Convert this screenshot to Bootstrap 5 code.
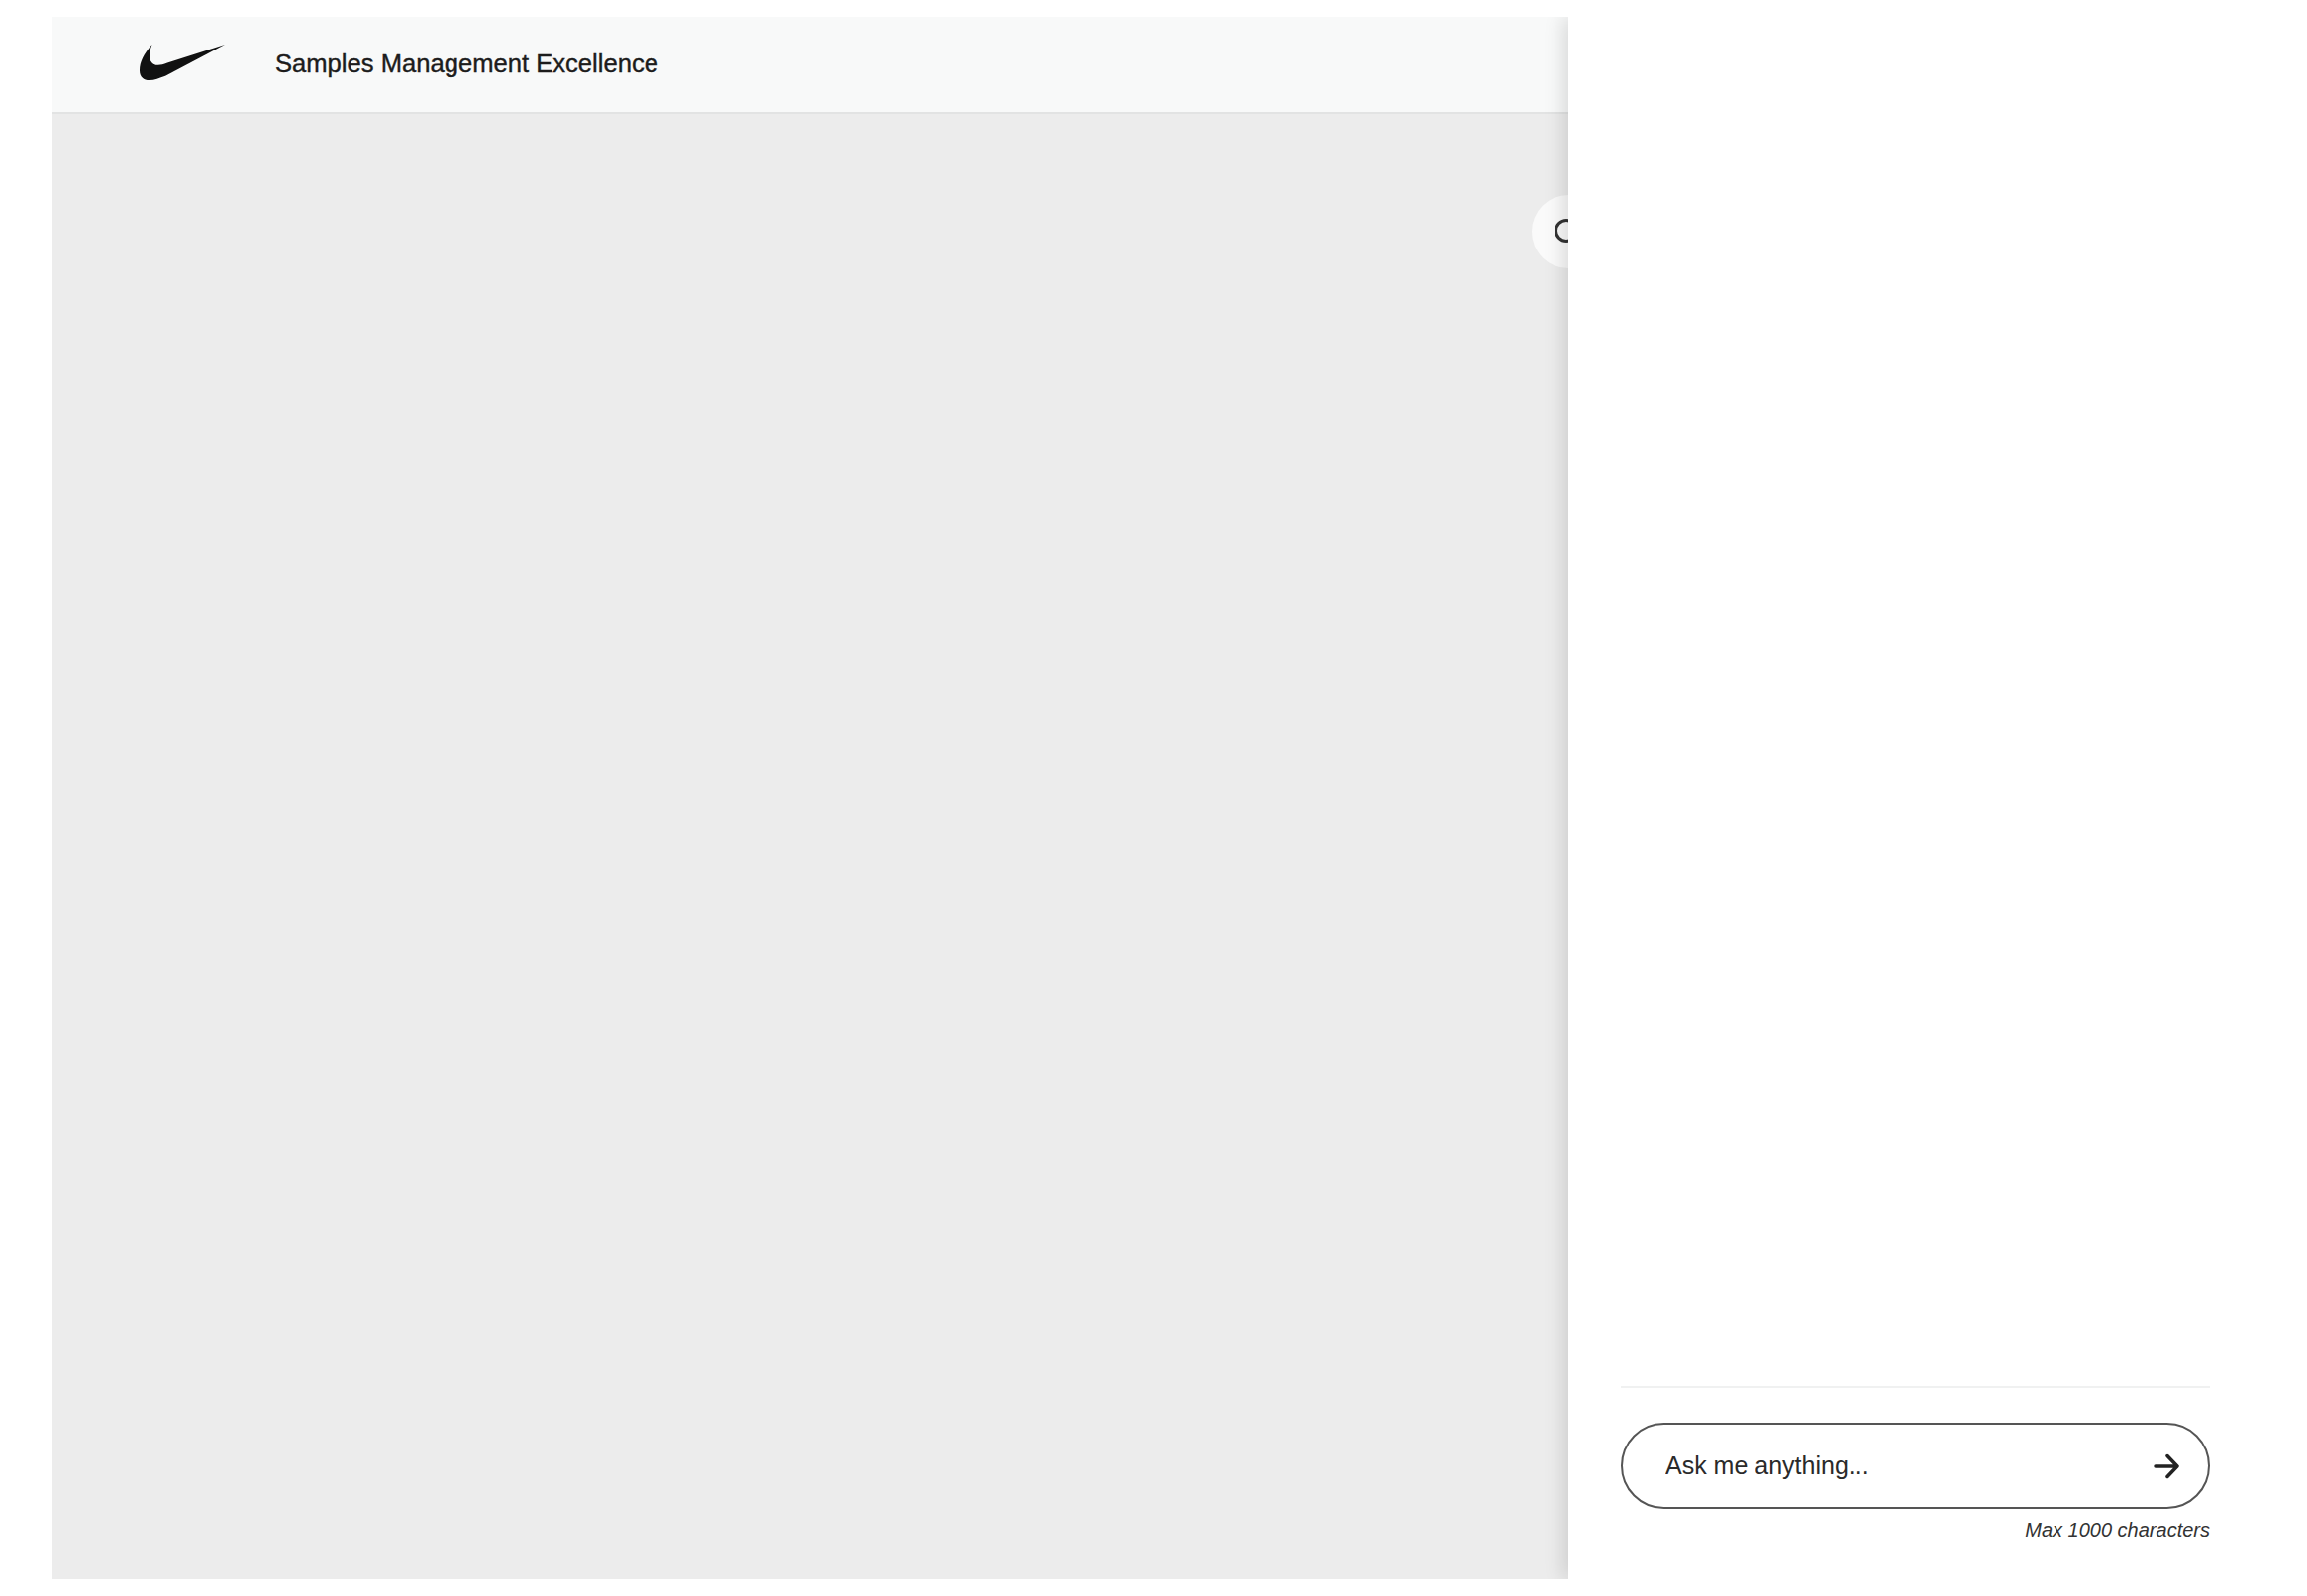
<!DOCTYPE html>
<html lang="en">

<head>
  <meta charset="UTF-8" />
  <meta name="viewport" content="width=device-width, initial-scale=1.0" />
  <title>Samples Management Excellence</title>
  <link href="https://cdn.jsdelivr.net/npm/bootstrap@5.3.0/dist/css/bootstrap.min.css" rel="stylesheet" />
  <style>
    html, body {
      height: 100%;
    }

    body {
      font-family: "Liberation Sans", Arial, sans-serif;
      color: #1c1c1c;
      background: #fff;
      padding: 17px 0 17px 53px;
    }

    .app-shell {
      height: 100%;
    }

    .report-pane {
      width: 1531px;
      background: #ececec;
    }

    .report-header {
      height: 98px;
      padding-left: 88px;
      gap: 51px;
      background: #f8f9f9;
      border-bottom: 2px solid #e2e3e3;
    }

    .report-title {
      font-size: 25.600px;
      line-height: 1;
      -webkit-text-stroke: 0.4px #1c1c1c;
    }

    .swoosh {
      width: 86px;
      height: 36px;
      fill: #111;
    }

    .spinner-tab {
      top: 180px;
      right: -37px;
      width: 74px;
      height: 74px;
      background: #fafafa;
    }

    .spinner-ring {
      width: 24px;
      height: 24px;
      margin: -2px 0 0 -4px;
      border: 3px solid #333;
      border-radius: 50%;
    }

    .chat-pane {
      z-index: 2;
      padding: 0 98px 38px 53px;
      box-shadow: -4px 0 20px rgba(0, 0, 0, 0.14);
      clip-path: inset(0 0 0 -30px);
    }

    .chat-divider {
      height: 37px;
      border-top: 2px solid #f0f1f1;
    }

    .ask-box {
      height: 87px;
      padding: 0 29px 0 43px;
      border: 2px solid #555;
    }

    .ask-input {
      font-size: 25px;
      color: #222;
      outline: none;
    }

    .ask-input::placeholder {
      color: #2a2a2a;
      opacity: 1;
    }

    .ask-send {
      width: 26px;
      height: 26px;
    }

    .ask-limit {
      margin-top: 9px;
      font-size: 20px;
      line-height: 24px;
      color: #333;
    }
  </style>
</head>

<body>
  <div class="app-shell d-flex">
    <main class="report-pane position-relative flex-shrink-0">
      <header class="report-header d-flex align-items-center">
        <svg class="swoosh flex-shrink-0 mb-1" viewBox="0 0 86 33" preserveAspectRatio="none" aria-label="Nike">
          <path d="M12.5 0C4 9 0 16 0 24c0 6 4 9 10 9 5 0 10-2 16-4L86 0 28 17c-6 2-10 3-14 1-5-3-5-10-1.500-18z" />
        </svg>
        <span class="report-title">Samples Management Excellence</span>
      </header>
      <div class="spinner-tab position-absolute rounded-circle d-flex align-items-center justify-content-center">
        <div class="spinner-ring"></div>
      </div>
    </main>

    <aside class="chat-pane position-relative bg-white flex-grow-1 d-flex flex-column justify-content-end">
      <div class="chat-divider"></div>
      <form class="ask-box d-flex align-items-center rounded-pill">
        <input class="ask-input flex-grow-1 border-0 bg-transparent p-0" type="text" placeholder="Ask me anything..." />
        <button class="ask-send btn p-0 border-0 d-flex" type="button" aria-label="Send">
          <svg viewBox="0 0 26 26" width="26" height="26" fill="none" stroke="#222" stroke-width="3.500" stroke-linecap="round" stroke-linejoin="round">
            <path d="M2 13h21M14 2.500 24 13 14 23.500" />
          </svg>
        </button>
      </form>
      <div class="ask-limit text-end fst-italic">Max 1000 characters</div>
    </aside>
  </div>

  <script src="https://cdn.jsdelivr.net/npm/bootstrap@5.3.0/dist/js/bootstrap.bundle.min.js"></script>
</body>

</html>
